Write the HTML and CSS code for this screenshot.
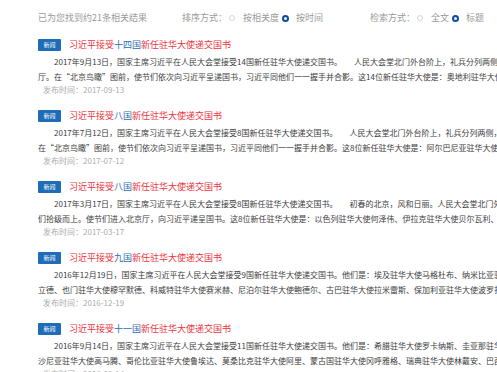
FILE: index.html
```html
<!DOCTYPE html>
<html lang="zh-CN">
<head>
<meta charset="utf-8">
<title>搜索结果</title>
<link rel="stylesheet" href="styles.css">
</head>
<body>
<div class="page">
  <div class="toolbar">
    <span class="count">已为您找到约21条相关结果</span>
    <div class="opt-group sort">
      <span class="opt-label">排序方式：</span>
      <span class="radio"></span><span class="opt-text">按相关度</span>
      <span class="radio on"></span><span class="opt-text">按时间</span>
    </div>
    <div class="opt-group mode">
      <span class="opt-label">检索方式：</span>
      <span class="radio"></span><span class="opt-text">全文</span>
      <span class="radio on"></span><span class="opt-text">标题</span>
    </div>
  </div>

  <ul class="results">
    <li class="item">
      <div class="title-row"><span class="badge">新闻</span><a class="title"><em>习近平接受</em>十四国<em>新任驻华大使递交国书</em></a></div>
      <p class="summary"><span class="l1">2017年9月13日，国家主席习近平在人民大会堂接受14国新任驻华大使递交国书。　　人民大会堂北门外台阶上，礼兵分列两侧，军乐团奏响迎宾曲。</span><br>厅。在“北京鸟瞰”图前，使节们依次向习近平呈递国书，习近平同他们一一握手并合影。这14位新任驻华大使是：奥地利驻华大使石迪福、</p>
      <div class="date">发布时间：2017-09-13</div>
    </li>
    <li class="item">
      <div class="title-row"><span class="badge">新闻</span><a class="title"><em>习近平接受</em>八国<em>新任驻华大使递交国书</em></a></div>
      <p class="summary"><span class="l1">2017年7月12日，国家主席习近平在人民大会堂接受8国新任驻华大使递交国书。　　人民大会堂北门外台阶上，礼兵分列两侧，军乐团奏响迎宾曲。</span><br>在“北京鸟瞰”图前，使节们依次向习近平呈递国书，习近平同他们一一握手并合影。这8位新任驻华大使是：阿尔巴尼亚驻华大使博奇、</p>
      <div class="date">发布时间：2017-07-12</div>
    </li>
    <li class="item">
      <div class="title-row"><span class="badge">新闻</span><a class="title"><em>习近平接受</em>八国<em>新任驻华大使递交国书</em></a></div>
      <p class="summary"><span class="l1">2017年3月17日，国家主席习近平在人民大会堂接受8国新任驻华大使递交国书。　　初春的北京，风和日丽。人民大会堂北门外台阶上，礼兵分列两侧。</span><br>们拾级而上。使节们进入北京厅，向习近平递呈国书。这8位新任驻华大使是：以色列驻华大使何泽伟、伊拉克驻华大使贝尔瓦利、艾</p>
      <div class="date">发布时间：2017-03-17</div>
    </li>
    <li class="item">
      <div class="title-row"><span class="badge">新闻</span><a class="title"><em>习近平接受</em>九国<em>新任驻华大使递交国书</em></a></div>
      <p class="summary"><span class="l1">2016年12月19日，国家主席习近平在人民大会堂接受9国新任驻华大使递交国书。他们是：埃及驻华大使马格杜布、纳米比亚驻华大使</span><br>立德、也门驻华大使穆罕默德、科威特驻华大使赛米赫、尼泊尔驻华大使鲍德尔、古巴驻华大使拉米雷斯、保加利亚驻华大使波罗扎诺夫、</p>
      <div class="date">发布时间：2016-12-19</div>
    </li>
    <li class="item">
      <div class="title-row"><span class="badge">新闻</span><a class="title"><em>习近平接受</em>十一国<em>新任驻华大使递交国书</em></a></div>
      <p class="summary"><span class="l1">2016年9月14日，国家主席习近平在人民大会堂接受11国新任驻华大使递交国书。他们是：希腊驻华大使罗卡纳斯、圭亚那驻华大使</span><br>沙尼亚驻华大使高马腾、哥伦比亚驻华大使鲁埃达、莫桑比克驻华大使阿里、蒙古国驻华大使冈呼雅格、瑞典驻华大使林戴安、巴西驻华大使</p>
      <div class="date">发布时间：2016-09-14</div>
    </li>
  </ul>
</div>
</body>
</html>
```

FILE: styles.css
```css
html, body {
  margin: 0;
  padding: 0;
  background: #ffffff;
  overflow: hidden;
}

body {
  font-family: "Noto Sans CJK SC", "Noto Sans", sans-serif;
  color: #333333;
}

.page {
  padding: 11px 0 0 38px;
  width: 900px;
}

.toolbar {
  display: flex;
  align-items: center;
  height: 14px;
  font-size: 9px;
  line-height: 14px;
  color: #9a9a9a;
  white-space: nowrap;
}

.opt-group {
  display: flex;
  align-items: center;
}

.sort {
  margin-left: 35px;
}

.mode {
  margin-left: 47px;
}

.opt-label {
  margin-right: 2px;
}

.radio {
  box-sizing: border-box;
  width: 6px;
  height: 6px;
  border-radius: 50%;
  border: 1px solid #d6d6d6;
  background: #fff;
  margin-right: 8px;
}

.radio.on {
  width: 7px;
  height: 7px;
  border: 2px solid #0d4b9e;
  margin-right: 7px;
  margin-left: 3px;
}

.opt-text + .radio {
  margin-left: 3px;
}

.results {
  list-style: none;
  margin: 14px 0 0 0;
  padding: 0;
}

.item {
  height: 71px;
}

.title-row {
  display: flex;
  align-items: center;
  height: 12px;
  gap: 8px;
}

.badge {
  display: inline-block;
  width: 23px;
  height: 12px;
  line-height: 12px;
  background: #1f6db8;
  color: #ffffff;
  font-size: 6px;
  text-align: center;
  border-radius: 1px;
}

.title {
  font-size: 9px;
  line-height: 12px;
  color: #2e6cb3;
  white-space: nowrap;
}

.title em {
  font-style: normal;
  color: #ec3440;
}

.summary {
  margin: 3px 0 0 0;
  font-size: 8px;
  line-height: 15px;
  color: #3c3c3c;
  white-space: nowrap;
}

.summary .l1 {
  padding-left: 16px;
}

.date {
  padding-left: 5px;
  font-size: 8px;
  line-height: 12px;
  color: #ababab;
}
```
